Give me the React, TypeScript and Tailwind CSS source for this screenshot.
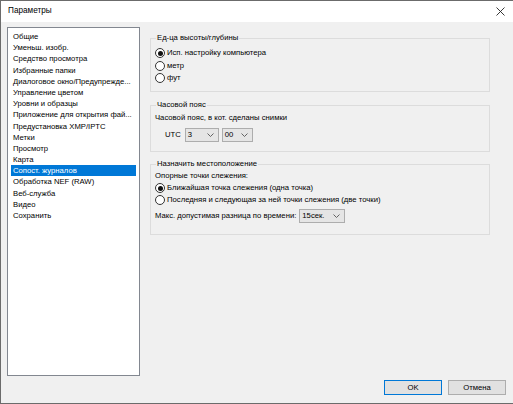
import React from 'react';

const items = [
  'Общие',
  'Уменьш. изобр.',
  'Средство просмотра',
  'Избранные папки',
  'Диалоговое окно/Предупрежде...',
  'Управление цветом',
  'Уровни и образцы',
  'Приложение для открытия фай...',
  'Предустановка XMP/IPTC',
  'Метки',
  'Просмотр',
  'Карта',
  'Сопост. журналов',
  'Обработка NEF (RAW)',
  'Веб-служба',
  'Видео',
  'Сохранить',
];

function Radio({ checked, label }: { checked?: boolean; label: string }) {
  return (
    <div className="flex items-center h-[12px] gap-[2px]">
      <span className="w-[10px] h-[10px] rounded-full border border-[#333] bg-white flex items-center justify-center">
        {checked && <span className="w-[5px] h-[5px] rounded-full bg-[#111]" />}
      </span>
      <span>{label}</span>
    </div>
  );
}

function Select({ value, w }: { value: string; w: string }) {
  return (
    <div className={`${w} h-[14px] bg-[#e5e5e5] border border-[#adadad] flex items-center justify-between pl-[2px] pr-[4px]`}>
      <span>{value}</span>
      <svg width="7" height="4" viewBox="0 0 7 4">
        <path d="M0.5 0.5 L3.5 3.5 L6.5 0.5" stroke="#555" fill="none" strokeWidth="0.9" />
      </svg>
    </div>
  );
}

function Group({ title, className, children }: { title: string; className: string; children: React.ReactNode }) {
  return (
    <div className={`relative border border-[#dcdcdc] ${className}`}>
      <span className="absolute left-[5px] top-[-7px] bg-[#f0f0f0] px-[1px] leading-[12px]">{title}</span>
      {children}
    </div>
  );
}

export default function App() {
  return (
    <div
      className="w-[513px] h-[404px] bg-[#f0f0f0] border-l border-b border-t border-[#6b6b6b] flex flex-col text-[7.7px] text-black overflow-hidden"
      style={{ fontFamily: '"Segoe UI", "Liberation Sans", Arial, sans-serif' }}
    >
      <div className="h-[21px] bg-white flex items-center justify-between pl-[7px] pr-[8px] shrink-0">
        <span className="text-[8.2px]">Параметры</span>
        <svg width="9" height="9" viewBox="0 0 9 9">
          <path d="M0.5 0.5 L8.5 8.5 M8.5 0.5 L0.5 8.5" stroke="#222" strokeWidth="0.9" />
        </svg>
      </div>
      <div className="flex flex-1 pt-[5px] pl-[6px]">
        <div className="w-[133px] h-[349px] bg-white border border-[#828790] pt-[3px] px-[3px] leading-[11.2px]">
          {items.map((it) =>
            it === 'Сопост. журналов' ? (
              <div key={it} className="bg-[#0078d7] text-white pl-[2px] h-[11.2px] whitespace-nowrap">{it}</div>
            ) : (
              <div key={it} className="pl-[2px] h-[11.2px] whitespace-nowrap">{it}</div>
            ),
          )}
        </div>
        <div className="flex flex-col ml-[10px] w-[340px] pt-[11px]">
          <Group title="Ед-ца высоты/глубины" className="h-[54px] pt-[8px] pl-[4px] flex flex-col gap-[0.6px]">
            <Radio checked label="Исп. настройку компьютера" />
            <Radio label="метр" />
            <Radio label="фут" />
          </Group>
          <Group title="Часовой пояс" className="mt-[13px] h-[47px] pt-[6px] pl-[4px]">
            <div className="leading-[12px]">Часовой пояс, в кот. сделаны снимки</div>
            <div className="flex items-center mt-[4px] pl-[10px] gap-[3px]">
              <span className="mr-[1px]">UTC</span>
              <Select value="3" w="w-[34px]" />
              <Select value="00" w="w-[31px]" />
            </div>
          </Group>
          <Group title="Назначить местоположение" className="mt-[12px] h-[71px] pt-[5px] pl-[4px]">
            <div className="leading-[12px]">Опорные точки слежения:</div>
            <Radio checked label="Ближайшая точка слежения (одна точка)" />
            <Radio label="Последняя и следующая за ней точки слежения (две точки)" />
            <div className="flex items-center mt-[3px] gap-[3px]">
              <span>Макс. допустимая разница по времени:</span>
              <Select value="15сек." w="w-[46px]" />
            </div>
          </Group>
        </div>
      </div>
      <div className="flex justify-end gap-[6px] pr-[7px] pb-[8px]">
        <button className="w-[58px] h-[15px] bg-[#e1e1e1] border border-[#0078d7] flex items-center justify-center">OK</button>
        <button className="w-[58px] h-[15px] bg-[#e1e1e1] border border-[#adadad] flex items-center justify-center">Отмена</button>
      </div>
    </div>
  );
}
